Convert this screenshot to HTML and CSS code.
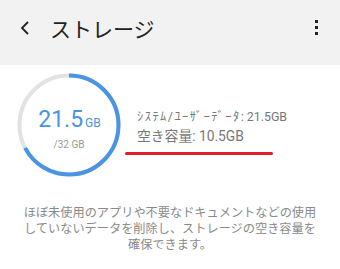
FILE: index.html
```html
<!DOCTYPE html>
<html lang="ja">
<head>
<meta charset="utf-8">
<link rel="stylesheet" href="styles.css">
</head>
<body>
<header class="appbar">
  <svg class="back" width="12" height="16" viewBox="0 0 12 16"><polyline points="9,2 3,8 9,14" fill="none" stroke="#222" stroke-width="1.8"/></svg>
  <h1 class="title">ストレージ</h1>
  <div class="menu"><span></span><span></span><span></span></div>
</header>
<main class="content">
  <section class="summary">
    <div class="gauge">
      <svg class="ring" width="106" height="106" viewBox="0 0 106 106">
        <circle cx="53" cy="53" r="49.5" fill="none" stroke="#e2e2e2" stroke-width="4"/>
        <circle cx="53" cy="53" r="49.5" fill="none" stroke="#4a94e4" stroke-width="4" stroke-dasharray="209.1 311.02" transform="rotate(-90 53 53)"/>
      </svg>
      <div class="gauge-text">
        <div class="used"><span class="num">21.5</span><span class="unit">GB</span></div>
        <div class="total">/32 GB</div>
      </div>
    </div>
    <div class="info">
      <div class="line-sys"><span class="kana">ｼｽﾃﾑ/ﾕｰｻﾞｰﾃﾞｰﾀ</span>: 21.5GB</div>
      <div class="line-free">空き容量: 10.5GB</div>
    </div>
  </section>
  <div class="underline"></div>
  <p class="desc">ほぼ未使用のアプリや不要なドキュメントなどの使用していないデータを削除し、ストレージの空き容量を確保できます。</p>
</main>
</body>
</html>
```
FILE: styles.css
```css
html, body {
  margin: 0;
  padding: 0;
  background: #ffffff;
  font-family: Roboto, "Noto Sans CJK JP", sans-serif;
}
.appbar {
  height: 65px;
  background: #f2f2f2;
  display: flex;
  align-items: center;
  padding: 0 0 0 19px;
  box-sizing: border-box;
}
.back {
  margin-top: -10px;
}
.title {
  margin: -10px 0 0 19px;
  font-family: "Noto Sans CJK JP", sans-serif;
  font-weight: 400;
  font-size: 21px;
  color: #222;
  flex: 1;
}
.menu {
  display: flex;
  flex-direction: column;
  gap: 3px;
  margin: -10px 22px 0 0;
}
.menu span {
  width: 3px;
  height: 3px;
  background: #222;
}
.summary {
  display: flex;
  align-items: center;
  padding: 7px 0 0 16px;
}
.gauge {
  display: grid;
  width: 106px;
  height: 106px;
}
.ring, .gauge-text {
  grid-area: 1 / 1;
}
.gauge-text {
  display: flex;
  flex-direction: column;
  align-items: center;
  justify-content: center;
  padding-top: 6px;
}
.used {
  color: #4a94e4;
  display: flex;
  align-items: baseline;
  margin-left: 1px;
}
.num {
  font-size: 23px;
}
.unit {
  font-size: 12px;
  margin-left: 2px;
}
.total {
  font-size: 10px;
  color: #9a9a9a;
  margin-top: 6px;
}
.info {
  margin-left: 15px;
  margin-top: 3px;
  color: #777777;
  font-family: Roboto, "Noto Sans CJK JP", sans-serif;
}
.line-sys {
  font-size: 12.4px;
  line-height: 18px;
}
.kana {
  letter-spacing: 1.5px;
}
.line-free {
  font-size: 13.8px;
  line-height: 20px;
}
.underline {
  width: 148px;
  height: 3px;
  border-radius: 2px;
  background: #e21c2a;
  margin: -26px 0 0 125px;
}
.desc {
  margin: 49px 20px 0;
  text-align: center;
  font-family: "Noto Sans CJK JP", sans-serif;
  font-size: 12.2px;
  line-height: 16px;
  color: #8a8a8a;
}
```
